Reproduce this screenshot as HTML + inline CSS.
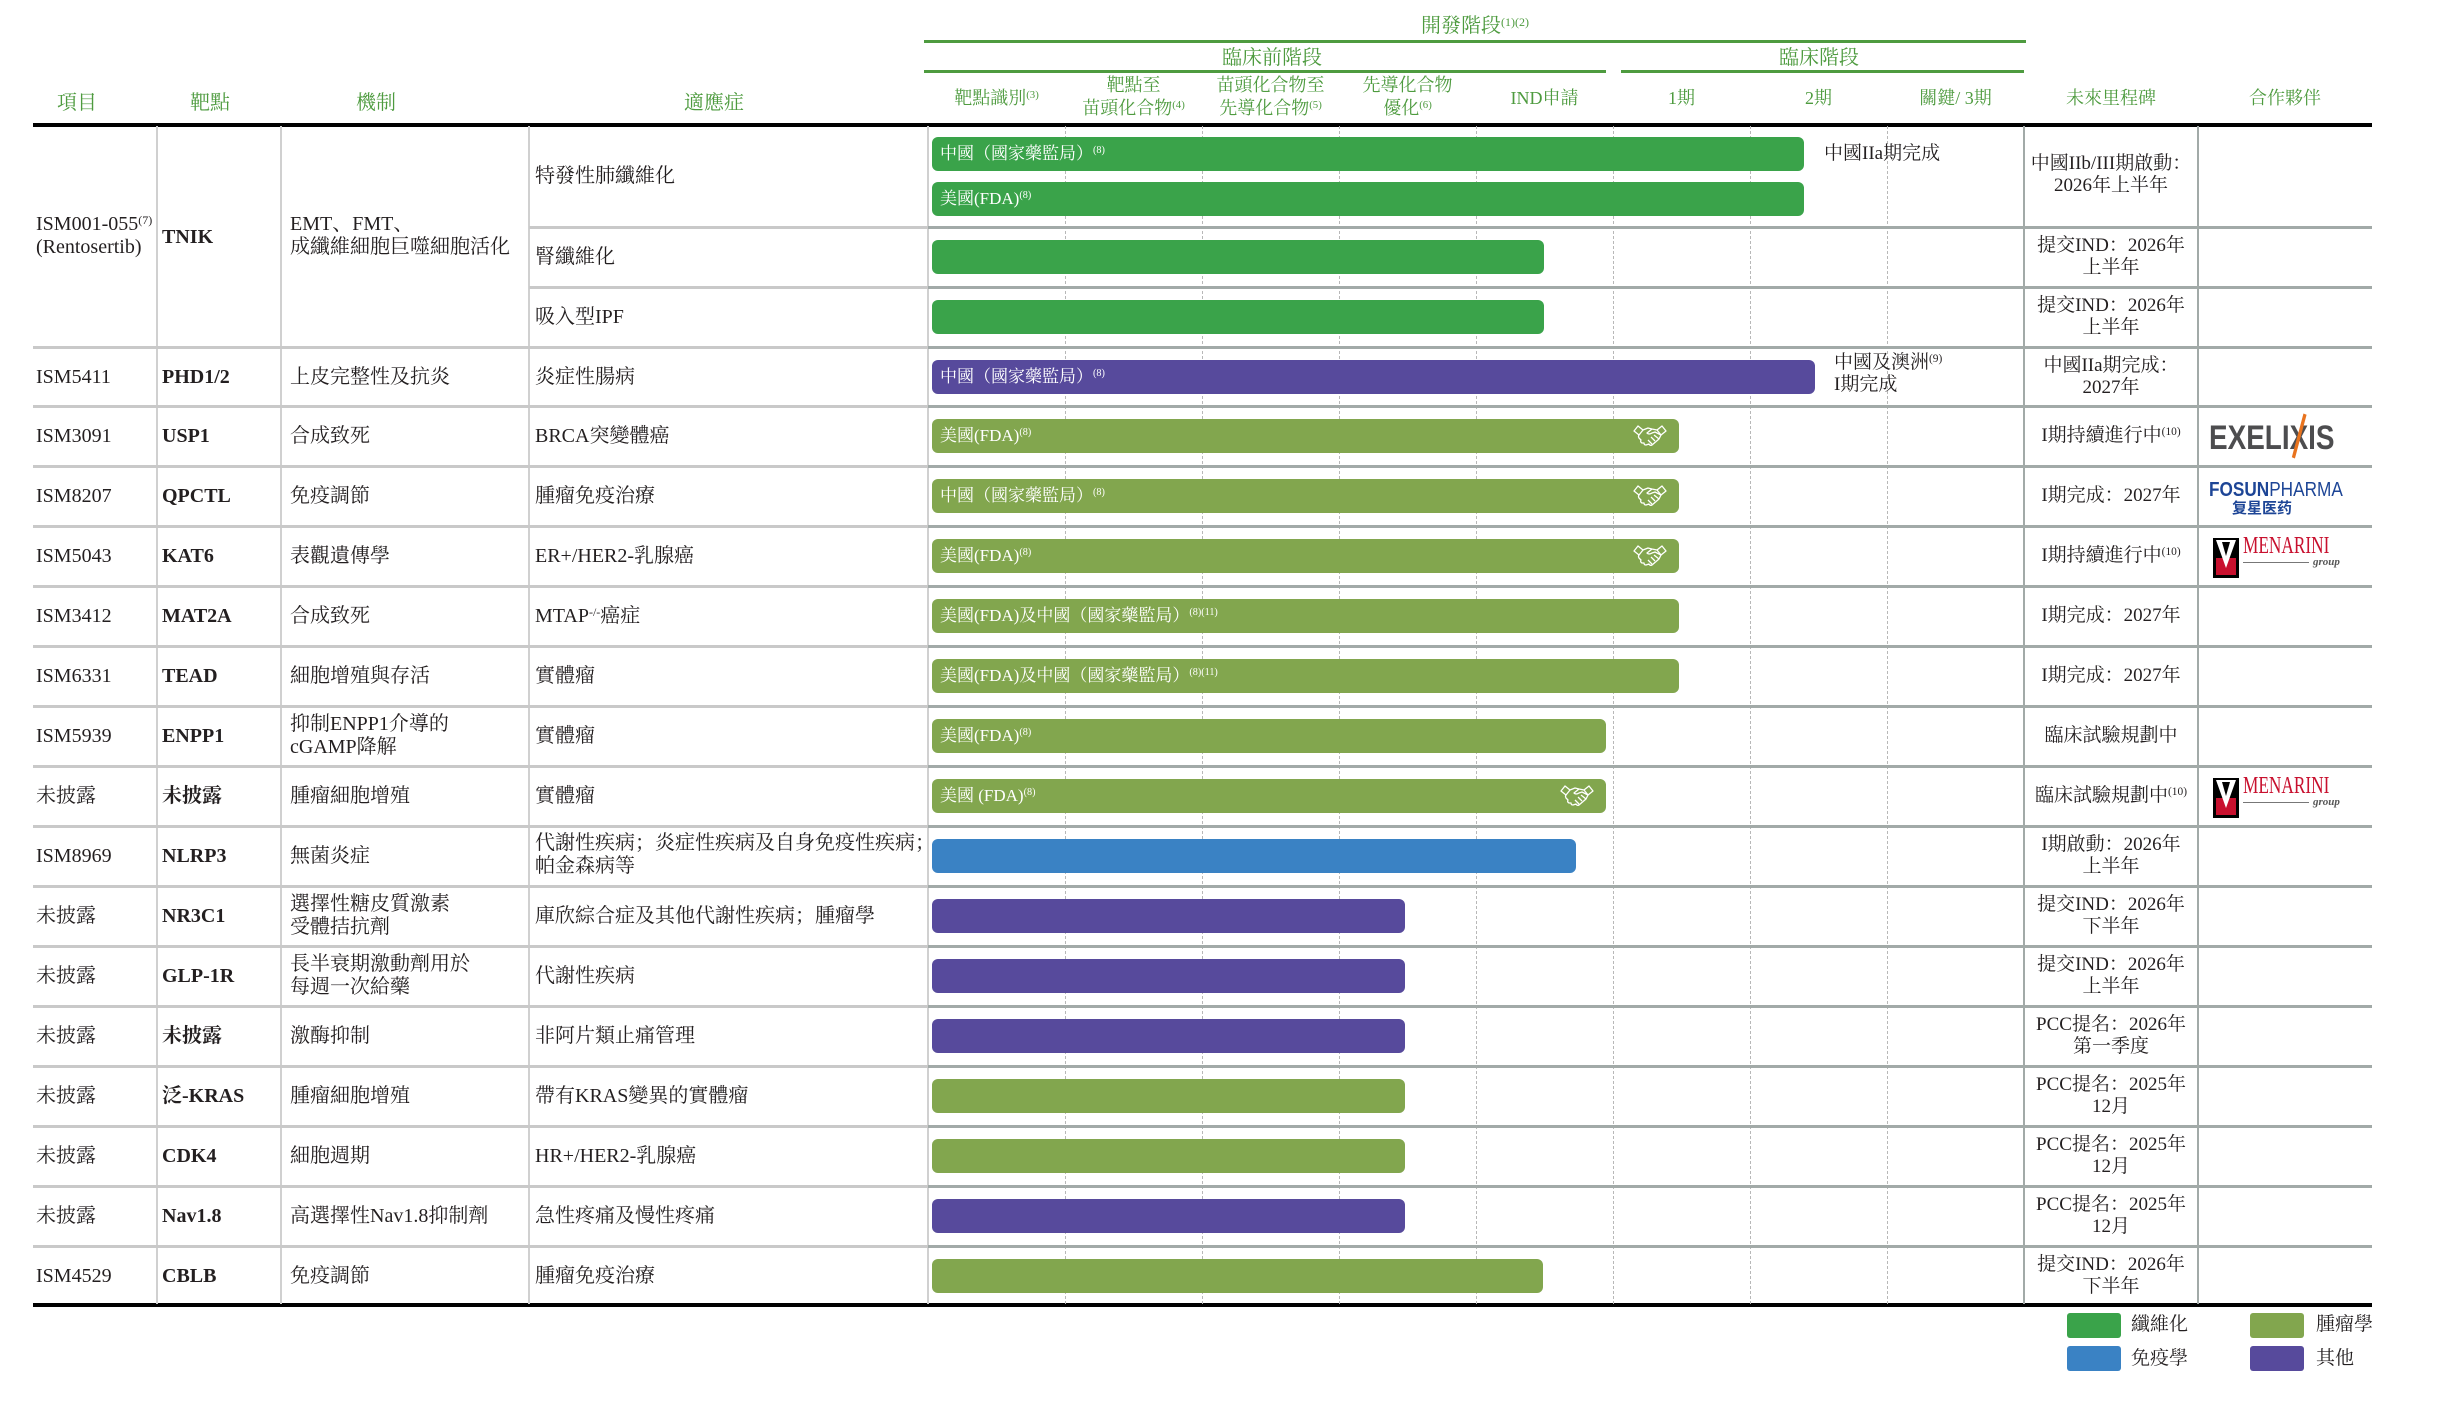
<!DOCTYPE html>
<html><head><meta charset="utf-8">
<style>
body{margin:0;background:#fff}
#w{position:relative;width:2446px;height:1404px;overflow:hidden;background:#fff;font-family:"Liberation Serif","Noto Serif CJK SC",serif;color:#231f20}
.a{position:absolute}
.t{position:absolute;font-size:20px;line-height:24px;white-space:nowrap}
.b{font-weight:bold}
.h{position:absolute;color:#4e9b3f;font-size:20px;line-height:24px;white-space:nowrap;text-align:center}
.c{position:absolute;text-align:center;width:174px;left:2024px;font-size:19px;line-height:22px;white-space:nowrap}
.bar{position:absolute;left:932px;height:34px;border-radius:6px;color:#fff;font-size:17px;line-height:34px;padding-left:8px;box-sizing:border-box;white-space:nowrap}
.f{background:#3aa34a}.o{background:#82a64e}.i{background:#3a82c4}.p{background:#574a9c}
sup{font-size:60%;vertical-align:6px;line-height:0}
.hl{position:absolute;background:#4e9b3f;height:3px}
.sl{position:absolute;height:3px;background:#c9c9c9;left:33px;width:895px}
.sr{position:absolute;height:3px;background:#a2aaa8;left:928px;width:1444px}
.vl{position:absolute;width:2px;background:#d0d0d0;top:126px;height:1178px}
.vr{position:absolute;width:2px;background:#a2aaa8;top:126px;height:1178px}
.dl{position:absolute;top:126px;height:1178px;width:0;border-left:1px dashed #b8b8b8}
.hs{position:absolute;right:12px;top:4px}
</style></head><body><div id="w">

<!-- header -->
<div class="h" style="left:1375px;top:14px;width:200px">開發階段<sup>(1)(2)</sup></div>
<div class="hl" style="left:924px;top:40px;width:1102px"></div>
<div class="h" style="left:1172px;top:46px;width:200px">臨床前階段</div>
<div class="h" style="left:1719px;top:46px;width:200px">臨床階段</div>
<div class="hl" style="left:924px;top:70px;width:682px"></div>
<div class="hl" style="left:1621px;top:70px;width:403px"></div>

<div class="h" style="left:27px;top:91px;width:100px">項目</div>
<div class="h" style="left:160px;top:91px;width:100px">靶點</div>
<div class="h" style="left:326px;top:91px;width:100px">機制</div>
<div class="h" style="left:664px;top:91px;width:100px">適應症</div>
<div class="h" style="left:928px;top:86px;width:137px;font-size:18px">靶點識別<sup>(3)</sup></div>
<div class="h" style="left:1065px;top:74px;width:137px;font-size:18px;line-height:23px">靶點至<br>苗頭化合物<sup>(4)</sup></div>
<div class="h" style="left:1202px;top:74px;width:137px;font-size:18px;line-height:23px">苗頭化合物至<br>先導化合物<sup>(5)</sup></div>
<div class="h" style="left:1339px;top:74px;width:137px;font-size:18px;line-height:23px">先導化合物<br>優化<sup>(6)</sup></div>
<div class="h" style="left:1476px;top:86px;width:137px;font-size:18px">IND申請</div>
<div class="h" style="left:1613px;top:86px;width:137px;font-size:18px">1期</div>
<div class="h" style="left:1750px;top:86px;width:137px;font-size:18px">2期</div>
<div class="h" style="left:1887px;top:86px;width:137px;font-size:18px">關鍵/ 3期</div>
<div class="h" style="left:2024px;top:86px;width:174px;font-size:18px">未來里程碑</div>
<div class="h" style="left:2198px;top:86px;width:174px;font-size:18px">合作夥伴</div>

<div class="a" style="left:33px;top:123px;width:2339px;height:4px;background:#000"></div>
<div class="a" style="left:33px;top:1303px;width:2339px;height:4px;background:#000"></div>

<!-- grid -->
<div class="dl" style="left:1065px"></div><div class="dl" style="left:1202px"></div><div class="dl" style="left:1339px"></div><div class="dl" style="left:1476px"></div><div class="dl" style="left:1613px"></div><div class="dl" style="left:1750px"></div><div class="dl" style="left:1887px"></div>
<div class="vl" style="left:156px"></div><div class="vl" style="left:280px"></div><div class="vl" style="left:528px"></div><div class="vl" style="left:927px"></div>
<div class="vr" style="left:2023px"></div><div class="vr" style="left:2197px"></div>

<div class="sl" style="top:226px;left:529px;width:399px"></div><div class="sr" style="top:226px"></div>
<div class="sl" style="top:286px;left:529px;width:399px"></div><div class="sr" style="top:286px"></div>
<div class="sl" style="top:346px"></div><div class="sr" style="top:346px"></div>
<div class="sl" style="top:405px"></div><div class="sr" style="top:405px"></div>
<div class="sl" style="top:465px"></div><div class="sr" style="top:465px"></div>
<div class="sl" style="top:525px"></div><div class="sr" style="top:525px"></div>
<div class="sl" style="top:585px"></div><div class="sr" style="top:585px"></div>
<div class="sl" style="top:645px"></div><div class="sr" style="top:645px"></div>
<div class="sl" style="top:705px"></div><div class="sr" style="top:705px"></div>
<div class="sl" style="top:765px"></div><div class="sr" style="top:765px"></div>
<div class="sl" style="top:825px"></div><div class="sr" style="top:825px"></div>
<div class="sl" style="top:885px"></div><div class="sr" style="top:885px"></div>
<div class="sl" style="top:945px"></div><div class="sr" style="top:945px"></div>
<div class="sl" style="top:1005px"></div><div class="sr" style="top:1005px"></div>
<div class="sl" style="top:1065px"></div><div class="sr" style="top:1065px"></div>
<div class="sl" style="top:1125px"></div><div class="sr" style="top:1125px"></div>
<div class="sl" style="top:1185px"></div><div class="sr" style="top:1185px"></div>
<div class="sl" style="top:1245px"></div><div class="sr" style="top:1245px"></div>

<!-- left text -->
<div class="t" style="left:36px;top:213px;line-height:23px">ISM001-055<sup>(7)</sup><br>(Rentosertib)</div>
<div class="t b" style="left:162px;top:225px">TNIK</div>
<div class="t" style="left:290px;top:213px;line-height:23px">EMT、FMT、<br>成纖維細胞巨噬細胞活化</div>
<div class="t" style="left:535px;top:164px">特發性肺纖維化</div>
<div class="t" style="left:535px;top:245px">腎纖維化</div>
<div class="t" style="left:535px;top:305px">吸入型IPF</div>

<div class="t" style="left:36px;top:365px">ISM5411</div><div class="t b" style="left:162px;top:365px">PHD1/2</div><div class="t" style="left:290px;top:365px">上皮完整性及抗炎</div><div class="t" style="left:535px;top:365px">炎症性腸病</div>
<div class="t" style="left:36px;top:424px">ISM3091</div><div class="t b" style="left:162px;top:424px">USP1</div><div class="t" style="left:290px;top:424px">合成致死</div><div class="t" style="left:535px;top:424px">BRCA突變體癌</div>
<div class="t" style="left:36px;top:484px">ISM8207</div><div class="t b" style="left:162px;top:484px">QPCTL</div><div class="t" style="left:290px;top:484px">免疫調節</div><div class="t" style="left:535px;top:484px">腫瘤免疫治療</div>
<div class="t" style="left:36px;top:544px">ISM5043</div><div class="t b" style="left:162px;top:544px">KAT6</div><div class="t" style="left:290px;top:544px">表觀遺傳學</div><div class="t" style="left:535px;top:544px">ER+/HER2-乳腺癌</div>
<div class="t" style="left:36px;top:604px">ISM3412</div><div class="t b" style="left:162px;top:604px">MAT2A</div><div class="t" style="left:290px;top:604px">合成致死</div><div class="t" style="left:535px;top:604px">MTAP<sup>-/-</sup>癌症</div>
<div class="t" style="left:36px;top:664px">ISM6331</div><div class="t b" style="left:162px;top:664px">TEAD</div><div class="t" style="left:290px;top:664px">細胞增殖與存活</div><div class="t" style="left:535px;top:664px">實體瘤</div>
<div class="t" style="left:36px;top:724px">ISM5939</div><div class="t b" style="left:162px;top:724px">ENPP1</div><div class="t" style="left:290px;top:713px;line-height:23px">抑制ENPP1介導的<br>cGAMP降解</div><div class="t" style="left:535px;top:724px">實體瘤</div>
<div class="t" style="left:36px;top:784px">未披露</div><div class="t b" style="left:162px;top:784px">未披露</div><div class="t" style="left:290px;top:784px">腫瘤細胞增殖</div><div class="t" style="left:535px;top:784px">實體瘤</div>
<div class="t" style="left:36px;top:844px">ISM8969</div><div class="t b" style="left:162px;top:844px">NLRP3</div><div class="t" style="left:290px;top:844px">無菌炎症</div><div class="t" style="left:535px;top:832px;line-height:23px">代謝性疾病；炎症性疾病及自身免疫性疾病；<br>帕金森病等</div>
<div class="t" style="left:36px;top:904px">未披露</div><div class="t b" style="left:162px;top:904px">NR3C1</div><div class="t" style="left:290px;top:893px;line-height:23px">選擇性糖皮質激素<br>受體拮抗劑</div><div class="t" style="left:535px;top:904px">庫欣綜合症及其他代謝性疾病；腫瘤學</div>
<div class="t" style="left:36px;top:964px">未披露</div><div class="t b" style="left:162px;top:964px">GLP-1R</div><div class="t" style="left:290px;top:953px;line-height:23px">長半衰期激動劑用於<br>每週一次給藥</div><div class="t" style="left:535px;top:964px">代謝性疾病</div>
<div class="t" style="left:36px;top:1024px">未披露</div><div class="t b" style="left:162px;top:1024px">未披露</div><div class="t" style="left:290px;top:1024px">激酶抑制</div><div class="t" style="left:535px;top:1024px">非阿片類止痛管理</div>
<div class="t" style="left:36px;top:1084px">未披露</div><div class="t b" style="left:162px;top:1084px">泛-KRAS</div><div class="t" style="left:290px;top:1084px">腫瘤細胞增殖</div><div class="t" style="left:535px;top:1084px">帶有KRAS變異的實體瘤</div>
<div class="t" style="left:36px;top:1144px">未披露</div><div class="t b" style="left:162px;top:1144px">CDK4</div><div class="t" style="left:290px;top:1144px">細胞週期</div><div class="t" style="left:535px;top:1144px">HR+/HER2-乳腺癌</div>
<div class="t" style="left:36px;top:1204px">未披露</div><div class="t b" style="left:162px;top:1204px">Nav1.8</div><div class="t" style="left:290px;top:1204px">高選擇性Nav1.8抑制劑</div><div class="t" style="left:535px;top:1204px">急性疼痛及慢性疼痛</div>
<div class="t" style="left:36px;top:1264px">ISM4529</div><div class="t b" style="left:162px;top:1264px">CBLB</div><div class="t" style="left:290px;top:1264px">免疫調節</div><div class="t" style="left:535px;top:1264px">腫瘤免疫治療</div>

<!-- bars -->
<div class="bar f" style="top:137px;width:872px">中國（國家藥監局）<sup>(8)</sup></div>
<div class="bar f" style="top:182px;width:872px">美國(FDA)<sup>(8)</sup></div>
<div class="bar f" style="top:240px;width:612px"></div>
<div class="bar f" style="top:300px;width:612px"></div>
<div class="bar p" style="top:360px;width:883px">中國（國家藥監局）<sup>(8)</sup></div>
<div class="bar o" style="top:419px;width:747px">美國(FDA)<sup>(8)</sup><svg class="hs" width="34" height="26" viewBox="0 0 34 26" fill="none" stroke="#fff" stroke-width="1.3" stroke-linejoin="round"><path d="M1 8 L5 3 L10 7 L6 12 Z"/><path d="M33 8 L29 3 L24 7 L28 12 Z"/><path d="M10 7 L15 5 L19 6 L24 7"/><path d="M19 6 L14 10 Q16 12 19 10 L22 9 L28 12 L26 16 L19 22 Q17 23 16 21 L13 22 Q11 22 11 20 L9 20 Q7 19 8 17 L6 15 Q5 13 6 12"/><path d="M26 16 L21 12 M22 18 L18 14 M19 21 L15 17"/></svg></div>
<div class="bar o" style="top:479px;width:747px">中國（國家藥監局）<sup>(8)</sup><svg class="hs" width="34" height="26" viewBox="0 0 34 26" fill="none" stroke="#fff" stroke-width="1.3" stroke-linejoin="round"><path d="M1 8 L5 3 L10 7 L6 12 Z"/><path d="M33 8 L29 3 L24 7 L28 12 Z"/><path d="M10 7 L15 5 L19 6 L24 7"/><path d="M19 6 L14 10 Q16 12 19 10 L22 9 L28 12 L26 16 L19 22 Q17 23 16 21 L13 22 Q11 22 11 20 L9 20 Q7 19 8 17 L6 15 Q5 13 6 12"/><path d="M26 16 L21 12 M22 18 L18 14 M19 21 L15 17"/></svg></div>
<div class="bar o" style="top:539px;width:747px">美國(FDA)<sup>(8)</sup><svg class="hs" width="34" height="26" viewBox="0 0 34 26" fill="none" stroke="#fff" stroke-width="1.3" stroke-linejoin="round"><path d="M1 8 L5 3 L10 7 L6 12 Z"/><path d="M33 8 L29 3 L24 7 L28 12 Z"/><path d="M10 7 L15 5 L19 6 L24 7"/><path d="M19 6 L14 10 Q16 12 19 10 L22 9 L28 12 L26 16 L19 22 Q17 23 16 21 L13 22 Q11 22 11 20 L9 20 Q7 19 8 17 L6 15 Q5 13 6 12"/><path d="M26 16 L21 12 M22 18 L18 14 M19 21 L15 17"/></svg></div>
<div class="bar o" style="top:599px;width:747px">美國(FDA)及中國（國家藥監局）<sup>(8)(11)</sup></div>
<div class="bar o" style="top:659px;width:747px">美國(FDA)及中國（國家藥監局）<sup>(8)(11)</sup></div>
<div class="bar o" style="top:719px;width:674px">美國(FDA)<sup>(8)</sup></div>
<div class="bar o" style="top:779px;width:674px">美國 (FDA)<sup>(8)</sup><svg class="hs" width="34" height="26" viewBox="0 0 34 26" fill="none" stroke="#fff" stroke-width="1.3" stroke-linejoin="round"><path d="M1 8 L5 3 L10 7 L6 12 Z"/><path d="M33 8 L29 3 L24 7 L28 12 Z"/><path d="M10 7 L15 5 L19 6 L24 7"/><path d="M19 6 L14 10 Q16 12 19 10 L22 9 L28 12 L26 16 L19 22 Q17 23 16 21 L13 22 Q11 22 11 20 L9 20 Q7 19 8 17 L6 15 Q5 13 6 12"/><path d="M26 16 L21 12 M22 18 L18 14 M19 21 L15 17"/></svg></div>
<div class="bar i" style="top:839px;width:644px"></div>
<div class="bar p" style="top:899px;width:473px"></div>
<div class="bar p" style="top:959px;width:473px"></div>
<div class="bar p" style="top:1019px;width:473px"></div>
<div class="bar o" style="top:1079px;width:473px"></div>
<div class="bar o" style="top:1139px;width:473px"></div>
<div class="bar p" style="top:1199px;width:473px"></div>
<div class="bar o" style="top:1259px;width:611px"></div>

<div class="t" style="left:1824px;top:142px;font-size:19px">中國IIa期完成</div>
<div class="t" style="left:1834px;top:352px;font-size:19px;line-height:22px">中國及澳洲<sup>(9)</sup><br>I期完成</div>

<!-- milestones -->
<div class="c" style="top:153px">中國IIb/III期啟動：<br>2026年上半年</div>
<div class="c" style="top:235px">提交IND：2026年<br>上半年</div>
<div class="c" style="top:295px">提交IND：2026年<br>上半年</div>
<div class="c" style="top:355px">中國IIa期完成：<br>2027年</div>
<div class="c" style="top:425px">I期持續進行中<sup>(10)</sup></div>
<div class="c" style="top:485px">I期完成：2027年</div>
<div class="c" style="top:545px">I期持續進行中<sup>(10)</sup></div>
<div class="c" style="top:605px">I期完成：2027年</div>
<div class="c" style="top:665px">I期完成：2027年</div>
<div class="c" style="top:725px">臨床試驗規劃中</div>
<div class="c" style="top:785px">臨床試驗規劃中<sup>(10)</sup></div>
<div class="c" style="top:834px">I期啟動：2026年<br>上半年</div>
<div class="c" style="top:894px">提交IND：2026年<br>下半年</div>
<div class="c" style="top:954px">提交IND：2026年<br>上半年</div>
<div class="c" style="top:1014px">PCC提名：2026年<br>第一季度</div>
<div class="c" style="top:1074px">PCC提名：2025年<br>12月</div>
<div class="c" style="top:1134px">PCC提名：2025年<br>12月</div>
<div class="c" style="top:1194px">PCC提名：2025年<br>12月</div>
<div class="c" style="top:1254px">提交IND：2026年<br>下半年</div>

<!-- logos -->
<div class="a" style="left:2209px;top:420px;font-family:'Liberation Sans',sans-serif;font-weight:bold;font-size:34px;line-height:36px;color:#4d4d4f;transform:scaleX(0.82);transform-origin:left">EXELI<span style="color:#4d4d4f;position:relative">X<span style="position:absolute;left:10px;top:-6px;width:4px;height:46px;background:#e8731e;transform:rotate(18deg)"></span></span>IS</div>
<div class="a" style="left:2209px;top:480px;font-family:'Liberation Sans',sans-serif;font-size:20px;line-height:20px;color:#1d4596;transform:scaleX(0.86);transform-origin:left;white-space:nowrap"><b>FOSUN</b>PHARMA</div>
<div class="a" style="left:2232px;top:500px;font-family:'Noto Sans CJK SC',sans-serif;font-weight:bold;font-size:15px;line-height:16px;color:#1d4596">复星医药</div>

<svg class="a" style="left:2213px;top:538px" width="26" height="40" viewBox="0 0 26 40"><rect x="0" y="0" width="26" height="40" fill="#000"/><rect x="3" y="20" width="20" height="17" fill="#c8102e"/><path d="M3 2 L13 30 L23 2 Z" fill="#fff"/><path d="M9 4 L13 18 L17 4 Z" fill="#000"/></svg>
<div class="a" style="left:2243px;top:534px;font-size:24px;line-height:24px;color:#c8102e;transform:scaleX(0.72);transform-origin:left">MENARINI</div>
<div class="a" style="left:2243px;top:562px;width:66px;height:1px;background:#777"></div>
<div class="a" style="left:2313px;top:556px;font-size:11px;font-style:italic;font-weight:bold;color:#555">group</div>

<svg class="a" style="left:2213px;top:778px" width="26" height="40" viewBox="0 0 26 40"><rect x="0" y="0" width="26" height="40" fill="#000"/><rect x="3" y="20" width="20" height="17" fill="#c8102e"/><path d="M3 2 L13 30 L23 2 Z" fill="#fff"/><path d="M9 4 L13 18 L17 4 Z" fill="#000"/></svg>
<div class="a" style="left:2243px;top:774px;font-size:24px;line-height:24px;color:#c8102e;transform:scaleX(0.72);transform-origin:left">MENARINI</div>
<div class="a" style="left:2243px;top:802px;width:66px;height:1px;background:#777"></div>
<div class="a" style="left:2313px;top:796px;font-size:11px;font-style:italic;font-weight:bold;color:#555">group</div>

<!-- legend -->
<div class="a f" style="left:2067px;top:1313px;width:54px;height:25px;border-radius:3px"></div>
<div class="t" style="left:2131px;top:1313px;font-size:19px">纖維化</div>
<div class="a o" style="left:2250px;top:1313px;width:54px;height:25px;border-radius:3px"></div>
<div class="t" style="left:2316px;top:1313px;font-size:19px">腫瘤學</div>
<div class="a i" style="left:2067px;top:1346px;width:54px;height:25px;border-radius:3px"></div>
<div class="t" style="left:2131px;top:1347px;font-size:19px">免疫學</div>
<div class="a p" style="left:2250px;top:1346px;width:54px;height:25px;border-radius:3px"></div>
<div class="t" style="left:2316px;top:1347px;font-size:19px">其他</div>

</div></body></html>
